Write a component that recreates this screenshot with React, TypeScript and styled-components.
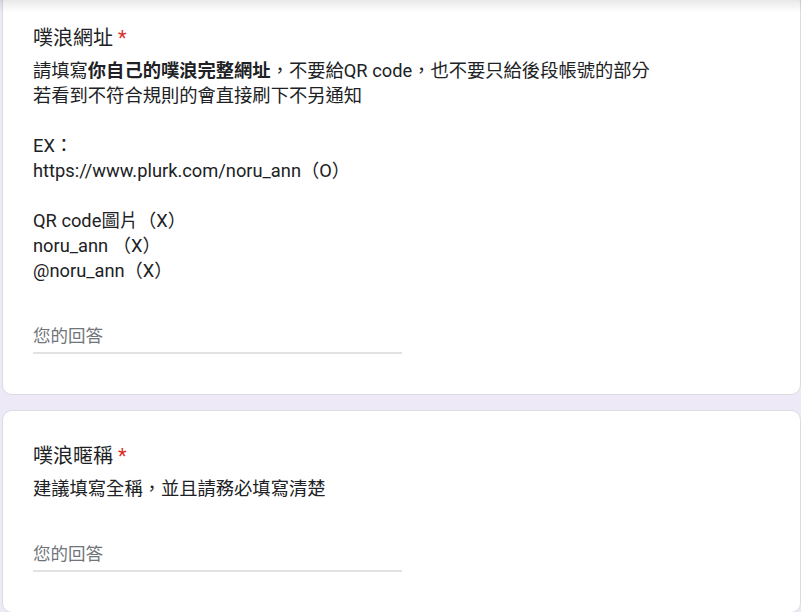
import React from 'react';
import styled, { createGlobalStyle } from 'styled-components';

// a description line is a list of segments; bold segments are marked
type Segment = string | { bold: string };

interface Question {
  title: string;
  required: boolean;
  lines: Segment[][];
}

const questions: Question[] = [
  {
    title: '噗浪網址',
    required: true,
    lines: [
      ['請填寫', { bold: '你自己的噗浪完整網址' }, '，不要給QR code，也不要只給後段帳號的部分'],
      ['若看到不符合規則的會直接刷下不另通知'],
      [''],
      ['EX：'],
      ['https://www.plurk.com/noru_ann（O）'],
      [''],
      ['QR code圖片（X）'],
      ['noru_ann （X）'],
      ['@noru_ann（X）'],
    ],
  },
  {
    title: '噗浪暱稱',
    required: true,
    lines: [['建議填寫全稱，並且請務必填寫清楚']],
  },
];

const App: React.FC = () => {
  return (
    <>
      <GlobalStyle />
      <TopShade />
      <Page>
        {questions.map((q) => (
          <Card key={q.title}>
            <Title>
              {q.title}
              {q.required && <Required>*</Required>}
            </Title>
            <Description>
              {q.lines.map((line, i) => (
                <Line key={i}>
                  {line.map((seg, j) =>
                    typeof seg === 'string' ? (seg || '\u00a0') : <strong key={j}>{seg.bold}</strong>
                  )}
                </Line>
              ))}
            </Description>
            <AnswerInput placeholder="您的回答" />
          </Card>
        ))}
      </Page>
    </>
  );
};

const GlobalStyle = createGlobalStyle`
  html, body {
    margin: 0;
    padding: 0;
    background-color: #ede9f7;
    overflow: hidden;
  }
  body {
    font-family: Roboto, "Noto Sans CJK TC", Arial, sans-serif;
    color: #202124;
  }
`;

const TopShade = styled.div`
  position: fixed;
  top: 0;
  left: 0;
  right: 0;
  height: 12px;
  background: linear-gradient(to bottom, rgba(0, 0, 0, 0.09), rgba(0, 0, 0, 0));
  pointer-events: none;
  z-index: 2;
`;

const Page = styled.div`
  display: flex;
  flex-direction: column;
  gap: 15px;
  margin-top: -8px;
  padding-left: 2px;
  width: 799px;
`;

const Card = styled.div`
  background: #fff;
  border: 1px solid #dadce0;
  border-radius: 10px;
  padding: 30px 30px 40px;
  display: flex;
  flex-direction: column;
`;

const Title = styled.div`
  font-size: 20px;
  line-height: 30px;
  color: #202124;
`;

const Required = styled.span`
  color: #d93025;
  margin-left: 5px;
`;

const Description = styled.div`
  margin-top: 5px;
  font-size: 18.3px;
  line-height: 25px;
  color: #202124;

  strong {
    font-weight: 700;
  }
`;

const Line = styled.div`
  white-space: pre;
`;

const AnswerInput = styled.input`
  margin-top: 41px;
  width: 369px;
  box-sizing: border-box;
  border: none;
  border-bottom: 2px solid #e2e2e2;
  outline: none;
  padding: 0 0 3px;
  font-family: Roboto, "Noto Sans CJK TC", Arial, sans-serif;
  font-size: 17.5px;
  line-height: 25px;
  color: #202124;
  background: transparent;

  &::placeholder {
    color: #70757a;
  }
`;

export default App;
